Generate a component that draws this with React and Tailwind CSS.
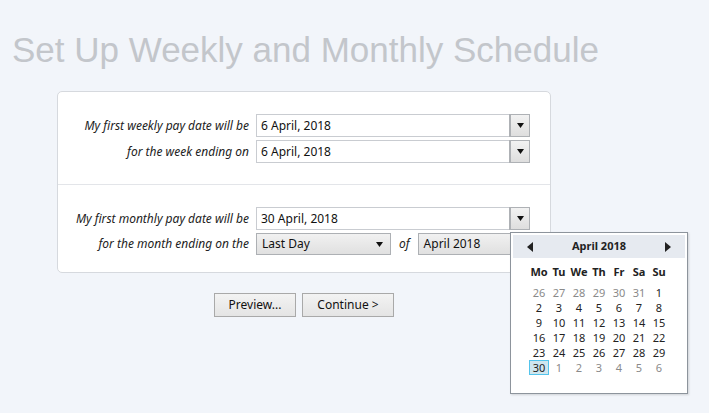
import React from 'react';

const font = { fontFamily: '"Noto Sans", "Open Sans", sans-serif' };

const Arrow = () => (
  <svg width="7" height="5" viewBox="0 0 7 5" className="fill-[#111]">
    <path d="M0 0h7L3.5 5z" />
  </svg>
);

const DateInput = ({ value }) => (
  <div className="flex h-[23px] w-[274px] border border-[#c9ccd1] bg-white">
    <div className="flex flex-1 items-center pl-[4px] text-[12px] text-[#111]">{value}</div>
    <div className="flex w-[19px] items-center justify-center border-l border-[#aeb1b5] bg-gradient-to-b from-[#f2f2f2] to-[#dedede] outline outline-1 outline-[#aeb1b5]">
      <Arrow />
    </div>
  </div>
);

const Row = ({ label, children }) => (
  <div className="flex items-center">
    <div className="w-[198px] pr-[7px] text-right text-[12px] italic text-[#222]">{label}</div>
    {children}
  </div>
);

const weeks = [
  [[26, 0], [27, 0], [28, 0], [29, 0], [30, 0], [31, 0], [1, 1]],
  [[2, 1], [3, 1], [4, 1], [5, 1], [6, 1], [7, 1], [8, 1]],
  [[9, 1], [10, 1], [11, 1], [12, 1], [13, 1], [14, 1], [15, 1]],
  [[16, 1], [17, 1], [18, 1], [19, 1], [20, 1], [21, 1], [22, 1]],
  [[23, 1], [24, 1], [25, 1], [26, 1], [27, 1], [28, 1], [29, 1]],
  [[30, 2], [1, 0], [2, 0], [3, 0], [4, 0], [5, 0], [6, 0]],
];

const Calendar = () => (
  <div className="absolute left-[510px] top-[232px] h-[162px] w-[178px] border border-[#8d949c] bg-white shadow-[1px_1px_2px_rgba(0,0,0,0.15)]">
    <div className="mx-[2px] mt-[2px] flex h-[23px] items-center justify-between bg-[#e6eaf0] px-[14px]">
      <svg width="6" height="10" viewBox="0 0 6 10" className="fill-[#222]">
        <path d="M6 0v10L0 5z" />
      </svg>
      <span className="text-[11px] font-bold text-[#222]">April 2018</span>
      <svg width="6" height="10" viewBox="0 0 6 10" className="fill-[#222]">
        <path d="M0 0v10l6-5z" />
      </svg>
    </div>
    <div className="ml-[18px] mt-[6px] grid w-[140px] grid-cols-7">
      {['Mo', 'Tu', 'We', 'Th', 'Fr', 'Sa', 'Su'].map((d) => (
        <div key={d} className="h-[16px] text-center text-[11px] font-bold leading-[16px] text-[#222]">
          {d}
        </div>
      ))}
    </div>
    <div className="ml-[18px] mt-[5px] grid w-[140px] grid-cols-7">
      {weeks.flat().map(([n, t], i) => (
        <div
          key={i}
          className={
            t === 2
              ? 'h-[15px] border border-[#54c4ec] bg-[#cfe6ee] text-center text-[11px] leading-[13px] text-[#222]'
              : t === 1
                ? 'h-[15px] text-center text-[11px] leading-[15px] text-[#222]'
                : 'h-[15px] text-center text-[11px] leading-[15px] text-[#8a8a8a]'
          }
        >
          {n}
        </div>
      ))}
    </div>
  </div>
);

const SelectBox = ({ value, className }) => (
  <div
    className={`flex h-[22px] items-center justify-between border border-[#adb0b4] bg-gradient-to-b from-[#f1f1f1] to-[#e0e0e0] pl-[5px] pr-[7px] text-[12px] text-[#111] ${className}`}
  >
    <span>{value}</span>
    <Arrow />
  </div>
);

export default function App() {
  return (
    <div className="relative h-[413px] w-[709px] bg-[#f2f5fa]" style={font}>
      <h1
        className="pl-[12px] pt-[30px] text-[35px] leading-[40px] text-[#c3c6cb]"
        style={{ fontFamily: '"Liberation Sans", Arial, sans-serif' }}
      >
        Set Up Weekly and Monthly Schedule
      </h1>
      <div className="ml-[57px] mt-[21px] w-[494px] rounded-[5px] border border-[#d6d9de] bg-white">
        <div className="flex h-[92px] flex-col gap-[3px] pt-[22px]">
          <Row label="My first weekly pay date will be">
            <DateInput value="6 April, 2018" />
          </Row>
          <Row label="for the week ending on">
            <DateInput value="6 April, 2018" />
          </Row>
        </div>
        <div className="flex h-[88px] flex-col gap-[3px] border-t border-[#e3e5e9] pt-[22px]">
          <Row label="My first monthly pay date will be">
            <DateInput value="30 April, 2018" />
          </Row>
          <Row label="for the month ending on the">
            <SelectBox value="Last Day" className="w-[135px]" />
            <span className="px-[8px] text-[12px] italic text-[#222]">of</span>
            <SelectBox value="April 2018" className="w-[114px]" />
          </Row>
        </div>
      </div>
      <div className="ml-[57px] mt-[20px] flex w-[494px] justify-center gap-[6px]">
        <button className="h-[24px] w-[82px] border border-[#a9a9a9] bg-gradient-to-b from-[#f3f3f3] to-[#e4e4e4] text-[12px] text-[#111]">
          Preview...
        </button>
        <button className="h-[24px] w-[92px] border border-[#a9a9a9] bg-gradient-to-b from-[#f3f3f3] to-[#e4e4e4] text-[12px] text-[#111]">
          Continue &gt;
        </button>
      </div>
      <Calendar />
    </div>
  );
}
